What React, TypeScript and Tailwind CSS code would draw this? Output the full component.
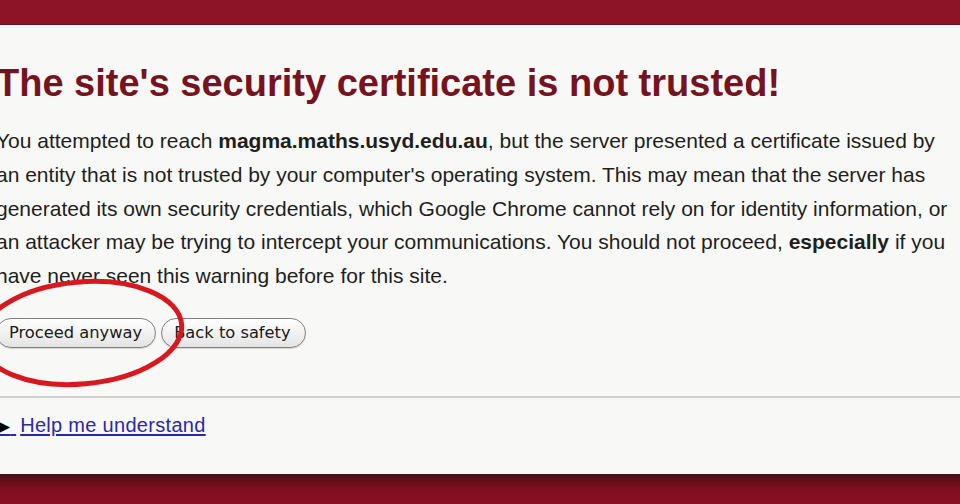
import React from "react";

export default function App() {
  return (
    <div className="flex h-[504px] w-[960px] flex-col overflow-hidden bg-[#8b1426] font-['Liberation_Sans',Arial,sans-serif]">
      {/* top band */}
      <div className="h-[25px] shrink-0 border-b border-[#6a0f1c] bg-[#8c1426]" />

      {/* page panel */}
      <div className="relative flex-1 overflow-hidden border-t border-white bg-[#f8f8f7]">
        <div className="-ml-[4px] pr-[6px] pt-[38px]">
          <h1 className="text-[38px] font-bold leading-none text-[#761320]">
            The site's security certificate is not trusted!
          </h1>
          <p className="mt-[22px] text-[21px] leading-[33.75px] text-[#1e1e1e]">
            You attempted to reach <b>magma.maths.usyd.edu.au</b>, but the server presented a
            certificate issued by an entity that is not trusted by your computer's operating
            system. This may mean that the server has generated its own security credentials,
            which Google Chrome cannot rely on for identity information, or an attacker may be
            trying to intercept your communications. You should not proceed,{" "}
            <b>especially</b> if you have never seen this warning before for this site.
          </p>

          {/* buttons */}
          <div className="relative mt-[25px] flex gap-[5px] font-['DejaVu_Sans',sans-serif] text-[16.3px] text-[#1a1a1a]">
            <button className="flex h-[30px] items-center rounded-full border border-[#808080] bg-gradient-to-b from-[#ffffff] to-[#e4e4e4] pl-[12px] pr-[13px] shadow-[0_1px_1px_rgba(0,0,0,0.15)]">
              Proceed anyway
            </button>
            <button className="flex h-[30px] items-center rounded-full border border-[#808080] bg-gradient-to-b from-[#ffffff] to-[#e4e4e4] pl-[12px] pr-[14px] shadow-[0_1px_1px_rgba(0,0,0,0.15)]">
              Back to safety
            </button>

            {/* red marker circle */}
            <svg
              className="pointer-events-none absolute left-[-35px] top-[-45px]"
              width="240"
              height="120"
              viewBox="0 0 240 120"
            >
              <ellipse
                cx="120"
                cy="60"
                rx="101"
                ry="51"
                transform="rotate(-5 120 60)"
                fill="none"
                stroke="#d8181e"
                strokeWidth="5"
              />
            </svg>
          </div>
        </div>

        <div className="mt-[48px] h-[2px] bg-[#d0d0d0]" />

        <div className="pt-[15px] leading-[24px]">
          <a className="-ml-[3px] text-[20px] tracking-[0.3px] text-[#2a2aa8] underline decoration-[1.5px] underline-offset-[2px]">
            <span className="text-[17px] text-black">▶</span>{"  "}
            <span className="ml-[4px]">Help me understand</span>
          </a>
        </div>
      </div>

      {/* bottom band */}
      <div className="h-[30px] shrink-0 bg-gradient-to-b from-[#4e0a13] via-[#7d0f1f] to-[#8b1024]" />
    </div>
  );
}
